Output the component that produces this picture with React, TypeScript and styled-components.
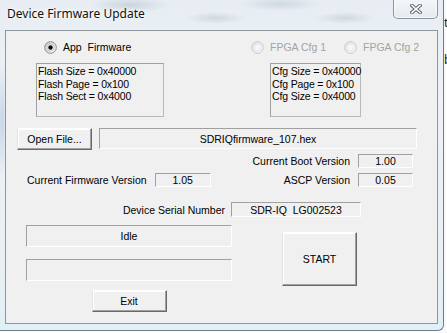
import styled, { createGlobalStyle } from 'styled-components'

const GlobalStyle = createGlobalStyle`
  html, body {
    margin: 0;
    padding: 0;
  }
  body {
    background: #fdfdfe;
    font-family: "Liberation Sans", Arial, sans-serif;
  }
`

const Desktop = styled.div`
  position: relative;
  width: 447px;
  height: 333px;
  overflow: hidden;
  display: flex;
  align-items: flex-start;
  background: #fcfdfe;
`

const Glass = styled.div`
  width: 443px;
  height: 330px;
  display: flex;
  flex-direction: column;
  border-right: 1px solid #707d89;
  border-bottom: 1px solid #707d89;
  border-bottom-right-radius: 6px;
  background:
    radial-gradient(ellipse 40px 8px at 130px 5px, rgba(150, 165, 180, 0.35), transparent),
    radial-gradient(ellipse 30px 6px at 215px 18px, rgba(150, 165, 180, 0.3), transparent),
    radial-gradient(ellipse 40px 7px at 280px 4px, rgba(150, 165, 180, 0.3), transparent),
    radial-gradient(ellipse 30px 6px at 345px 18px, rgba(150, 165, 180, 0.3), transparent),
    radial-gradient(ellipse 6px 60px at 2px 120px, rgba(120, 160, 200, 0.35), transparent),
    linear-gradient(180deg, #e7edf3 0%, #eef2f6 30%, #e9eff4 80%, #e0f0f6 100%);
`

const TitleBar = styled.div`
  height: 30px;
  display: flex;
  align-items: flex-start;
  justify-content: space-between;
`

const Title = styled.div`
  margin: 5px 0 0 7px;
  font-family: "Noto Sans", "Open Sans", sans-serif;
  font-size: 12px;
  line-height: 17px;
  color: #111;
  text-shadow: 0 0 6px #fff, 0 0 3px #fff;
`

const CloseButton = styled.div`
  width: 43px;
  height: 19px;
  margin: -1px 5px 0 0;
  display: flex;
  align-items: center;
  justify-content: center;
  border: 1px solid #8c96a0;
  border-top: none;
  border-radius: 0 0 5px 5px;
  background: linear-gradient(180deg, rgba(255, 255, 255, 0.55), rgba(225, 232, 238, 0.6));
  box-shadow: inset 0 0 0 1px rgba(255, 255, 255, 0.6);
`

const Client = styled.div`
  width: 433px;
  height: 294px;
  box-sizing: border-box;
  margin-left: 5px;
  border: 1px solid #8e969e;
  background: #f0f0f0;
  display: flex;
  flex-direction: column;
  font-size: 10.5px;
  color: #000;
`

const RadioRow = styled.div`
  margin-top: 10px;
  padding-left: 38px;
  height: 13px;
  display: grid;
  grid-template-columns: 207px 93px auto;
`

const RadioLabel = styled.label<{ $disabled?: boolean }>`
  display: inline-flex;
  align-items: center;
  gap: 6px;
  line-height: 13px;
  white-space: pre;
  color: ${({ $disabled }) => ($disabled ? '#a3a3a3' : '#000')};
`

const InfoRow = styled.div`
  margin-top: 9px;
  padding-left: 30px;
  display: flex;
  gap: 106px;
`

const InfoBox = styled.div<{ $width: number }>`
  width: ${({ $width }) => $width}px;
  height: 54px;
  box-sizing: border-box;
  padding: 1px 0 0 1px;
  border: 1px solid #a0a0a0;
  border-right-color: #b9b9b9;
  border-bottom-color: #b9b9b9;
  line-height: 12.7px;
  white-space: nowrap;
  letter-spacing: -0.15px;
`

const FileRow = styled.div`
  margin-top: 11px;
  padding-left: 11px;
  display: flex;
  align-items: flex-start;
  gap: 7px;
`

const Button = styled.div<{ $width: number; $height: number }>`
  width: ${({ $width }) => $width}px;
  height: ${({ $height }) => $height}px;
  box-sizing: border-box;
  display: flex;
  align-items: center;
  justify-content: center;
  background: #f0f0f0;
  border-top: 1px solid #ffffff;
  border-left: 1px solid #e3e3e3;
  border-right: 1px solid #696969;
  border-bottom: 1px solid #696969;
  box-shadow: inset -1px -1px 0 #a0a0a0, inset 1px 1px 0 #ffffff;
`

const Field = styled.div<{ $width: number; $height: number }>`
  width: ${({ $width }) => $width}px;
  height: ${({ $height }) => $height}px;
  box-sizing: border-box;
  display: flex;
  align-items: center;
  justify-content: center;
  border-top: 1px solid #a0a0a0;
  border-left: 1px solid #a0a0a0;
  border-right: 1px solid #ffffff;
  border-bottom: 1px solid #ffffff;
  white-space: pre;
`

const VersionRow = styled.div`
  margin-top: 4px;
  padding: 0 24px 0 21px;
  display: flex;
  align-items: flex-end;
  justify-content: space-between;
`

const LabelPair = styled.div`
  display: flex;
  align-items: center;
  gap: 8px;
`

const VersionGrid = styled.div`
  display: grid;
  grid-template-columns: auto 55px;
  grid-auto-rows: 14px;
  column-gap: 8px;
  row-gap: 5px;
  align-items: center;
  justify-items: end;
`

const SerialRow = styled.div`
  margin-top: 15px;
  padding-right: 76px;
  display: flex;
  justify-content: flex-end;
  align-items: center;
  gap: 6px;
`

const BottomRow = styled.div`
  margin-top: 8px;
  padding-left: 20px;
  display: flex;
  align-items: flex-start;
`

const StatusColumn = styled.div`
  width: 206px;
  display: flex;
  flex-direction: column;
  gap: 12px;
`

const ExitWrap = styled.div`
  margin-top: -3px;
  align-self: center;
`

const StartWrap = styled.div`
  margin: 7px 0 0 50px;
`

const Backdrop = styled.div`
  flex: 1;
  height: 100%;
  display: flex;
  flex-direction: column;
  padding-top: 14px;
  gap: 20px;
  font-family: "Noto Sans", sans-serif;
  font-size: 12px;
  color: #222;
  background: linear-gradient(90deg, #f4f7fa, #ffffff);
  overflow: hidden;
`

const Radio = ({ checked, disabled }: { checked?: boolean; disabled?: boolean }) => (
  <svg width="13" height="13" viewBox="0 0 13 13">
    <defs>
      <linearGradient id={disabled ? 'rgd' : 'rge'} x1="0" y1="0" x2="1" y2="1">
        <stop offset="0" stopColor={disabled ? '#e4e4e4' : '#c9c9c9'} />
        <stop offset="1" stopColor="#ffffff" />
      </linearGradient>
    </defs>
    <circle
      cx="6.5"
      cy="6.5"
      r="5.8"
      fill={`url(#${disabled ? 'rgd' : 'rge'})`}
      stroke={disabled ? '#c6c6c6' : '#8a8a8a'}
    />
    <circle cx="6.5" cy="6.5" r="3.6" fill={disabled ? '#f6f6f6' : '#eeeeee'} stroke={disabled ? '#dedede' : '#c2c2c2'} strokeWidth="0.8" />
    {checked && <circle cx="6.5" cy="6.5" r="2.2" fill="#0d0d0d" />}
  </svg>
)

const CloseGlyph = () => (
  <svg width="12" height="10" viewBox="0 0 12 10">
    <path d="M2 1.5 L10 8.5 M10 1.5 L2 8.5" stroke="#5f6770" strokeWidth="3.6" strokeLinecap="square" />
    <path d="M2 1.5 L10 8.5 M10 1.5 L2 8.5" stroke="#ffffff" strokeWidth="1.6" strokeLinecap="square" />
  </svg>
)

export default function App() {
  return (
    <>
      <GlobalStyle />
      <Desktop>
        <Glass>
          <TitleBar>
            <Title>Device Firmware Update</Title>
            <CloseButton>
              <CloseGlyph />
            </CloseButton>
          </TitleBar>
          <Client>
            <RadioRow>
              <RadioLabel>
                <Radio checked />
                {'App  Firmware'}
              </RadioLabel>
              <RadioLabel $disabled>
                <Radio disabled />
                FPGA Cfg 1
              </RadioLabel>
              <RadioLabel $disabled>
                <Radio disabled />
                FPGA Cfg 2
              </RadioLabel>
            </RadioRow>

            <InfoRow>
              <InfoBox $width={128}>
                Flash Size = 0x40000
                <br />
                Flash Page = 0x100
                <br />
                Flash Sect = 0x4000
              </InfoBox>
              <InfoBox $width={91}>
                Cfg Size = 0x40000
                <br />
                Cfg Page = 0x100
                <br />
                Cfg Size = 0x4000
              </InfoBox>
            </InfoRow>

            <FileRow>
              <Button $width={75} $height={22}>Open File...</Button>
              <Field $width={318} $height={21}>SDRIQfirmware_107.hex</Field>
            </FileRow>

            <VersionRow>
              <LabelPair>
                <span>Current Firmware Version</span>
                <Field $width={56} $height={14}>1.05</Field>
              </LabelPair>
              <VersionGrid>
                <span>Current Boot Version</span>
                <Field $width={55} $height={14}>1.00</Field>
                <span>ASCP Version</span>
                <Field $width={55} $height={14}>0.05</Field>
              </VersionGrid>
            </VersionRow>

            <SerialRow>
              <span>Device Serial Number</span>
              <Field $width={130} $height={15}>{'SDR-IQ  LG002523'}</Field>
            </SerialRow>

            <BottomRow>
              <StatusColumn>
                <Field $width={206} $height={22}>Idle</Field>
                <Field $width={206} $height={22} />
                <ExitWrap>
                  <Button $width={75} $height={22}>Exit</Button>
                </ExitWrap>
              </StatusColumn>
              <StartWrap>
                <Button $width={75} $height={54}>START</Button>
              </StartWrap>
            </BottomRow>
          </Client>
        </Glass>
        <Backdrop>
          <span>t</span>
          <span>b</span>
        </Backdrop>
      </Desktop>
    </>
  )
}
